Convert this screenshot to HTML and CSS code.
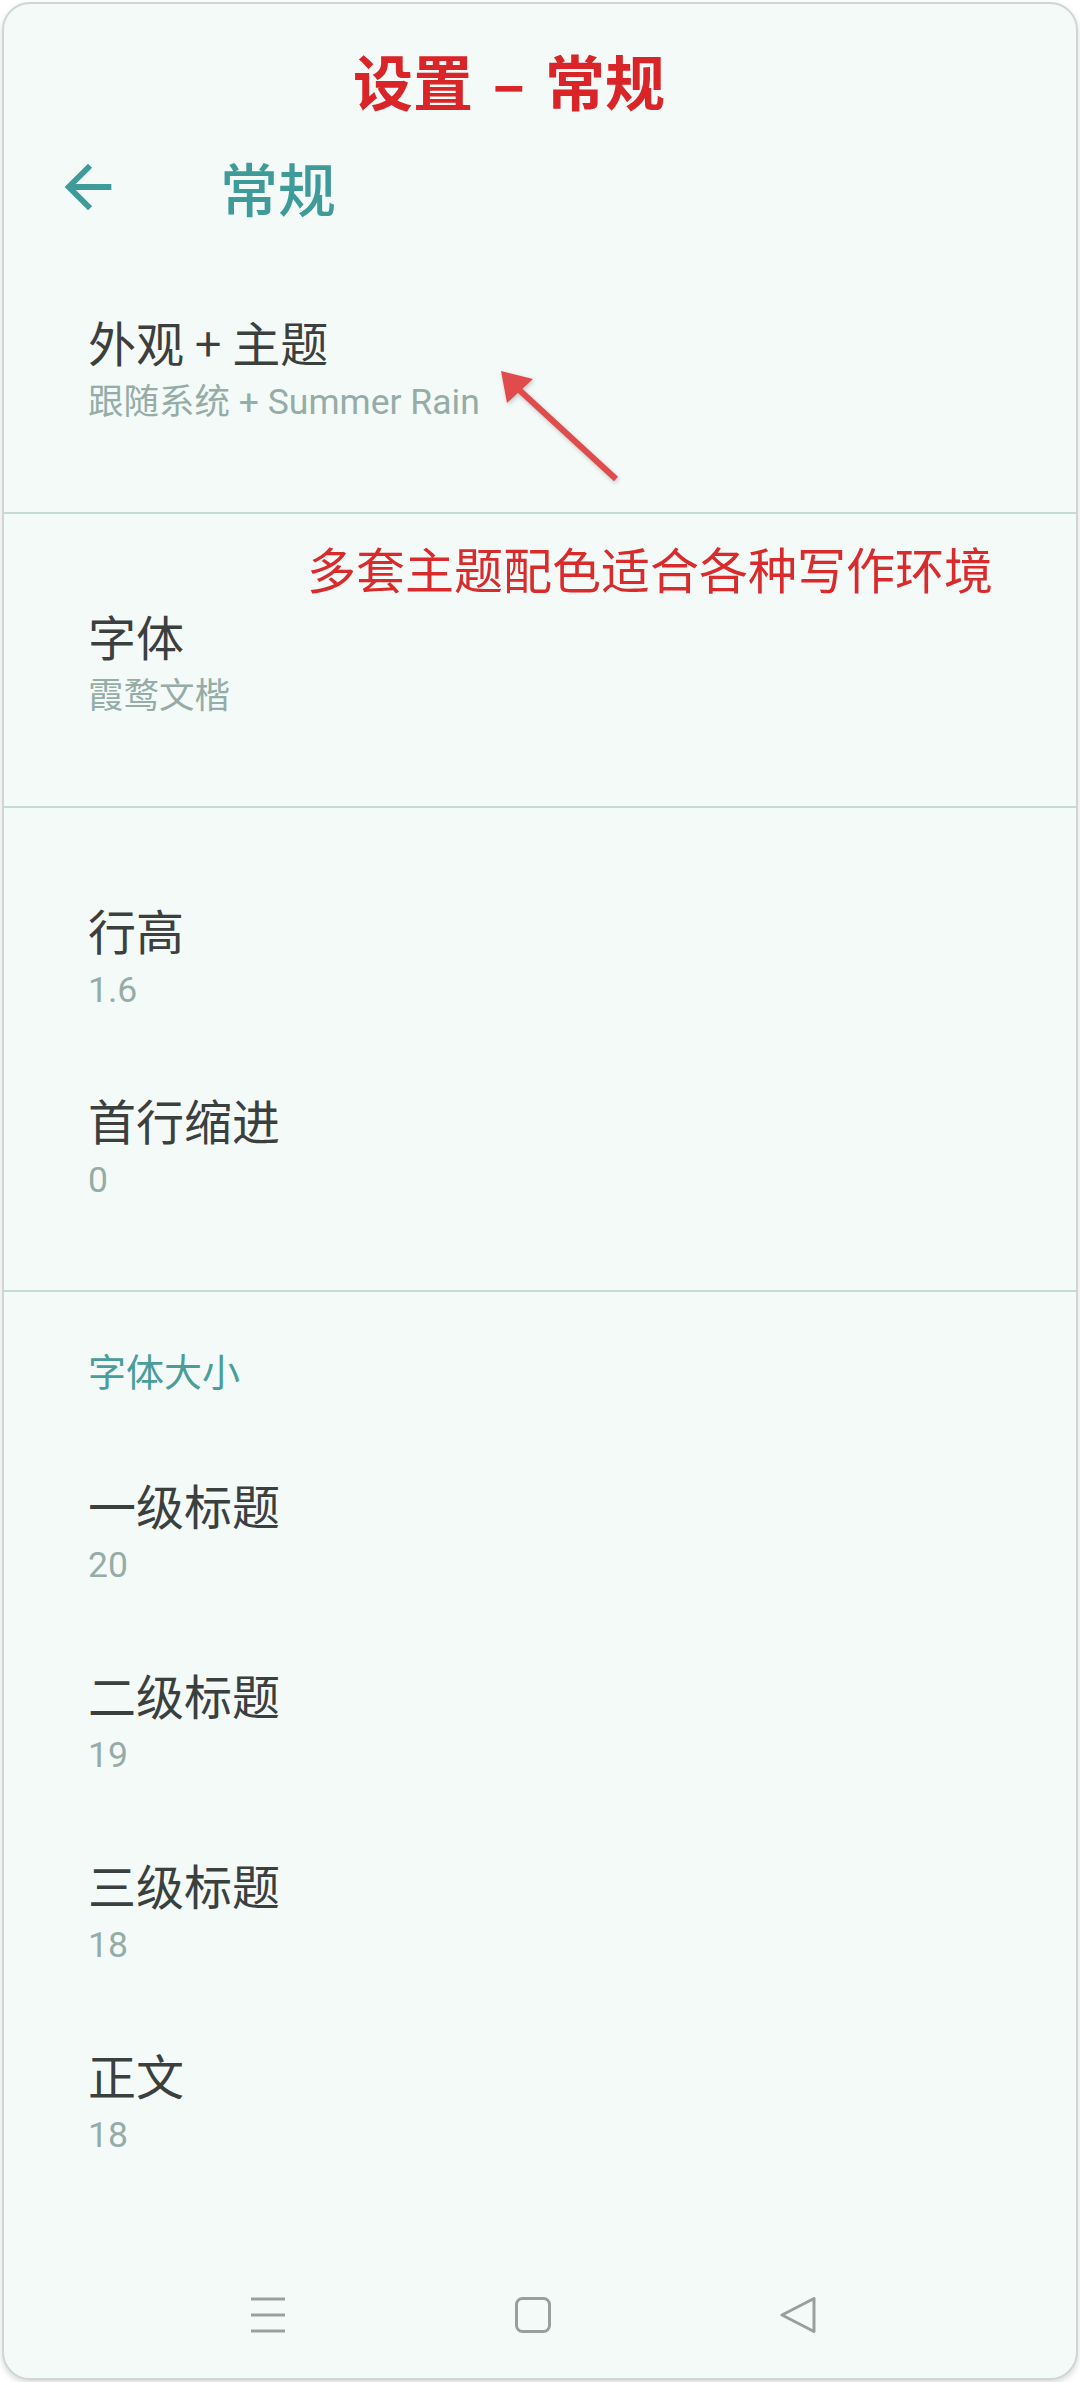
FILE: index.html
```html
<!DOCTYPE html>
<html lang="zh-CN">
<head>
    <meta charset="UTF-8" />
    <meta name="viewport" content="width=device-width, initial-scale=1.0"/>
    <title>设置 - 常规</title>
    <link rel="stylesheet" href="styles.css">
</head>
<body>
    <div class="screen">
        <div class="caption">设置 – 常规</div>

        <header class="appbar">
            <svg class="back" viewBox="0 0 24 24"><path d="M20 11H7.83l5.59-5.59L12 4l-8 8 8 8 1.41-1.41L7.83 13H20v-2z"/></svg>
            <h1 class="appbar-title">常规</h1>
        </header>

        <section class="group first">
            <div class="pref">
                <div class="pref-title">外观 + 主题</div>
                <div class="pref-summary">跟随系统 + Summer Rain</div>
            </div>
        </section>

        <section class="group">
            <div class="pref">
                <div class="pref-title">字体</div>
                <div class="pref-summary">霞鹜文楷</div>
            </div>
        </section>

        <section class="group">
            <div class="pref">
                <div class="pref-title">行高</div>
                <div class="pref-summary">1.6</div>
            </div>
            <div class="pref">
                <div class="pref-title">首行缩进</div>
                <div class="pref-summary">0</div>
            </div>
        </section>

        <section class="group">
            <div class="group-title">字体大小</div>
            <div class="pref">
                <div class="pref-title">一级标题</div>
                <div class="pref-summary">20</div>
            </div>
            <div class="pref">
                <div class="pref-title">二级标题</div>
                <div class="pref-summary">19</div>
            </div>
            <div class="pref">
                <div class="pref-title">三级标题</div>
                <div class="pref-summary">18</div>
            </div>
            <div class="pref">
                <div class="pref-title">正文</div>
                <div class="pref-summary">18</div>
            </div>
        </section>

        <nav class="navbar">
            <svg class="nav-icon" viewBox="0 0 36 36">
                <path d="M1 2h34M1 18h34M1 34h34"/>
            </svg>
            <svg class="nav-icon" viewBox="0 0 36 36">
                <rect x="1.5" y="1.5" width="33" height="33" rx="6"/>
            </svg>
            <svg class="nav-icon" viewBox="0 0 36 36">
                <path d="M2 18L34 1.5V34.5Z"/>
            </svg>
        </nav>

        <!-- annotations drawn over the screenshot -->
        <div class="note">多套主题配色适合各种写作环境</div>
        <svg class="pointer" viewBox="0 0 1072 600">
            <line x1="612" y1="475" x2="512" y2="383"/>
            <polygon points="497,367 529,375 503,399"/>
        </svg>
    </div>
</body>
</html>
```

FILE: styles.css
```css
body {
    margin: 0;
    background-color: #ffffff;
    font-family: "Noto Sans CJK SC", sans-serif;
}
.screen {
    position: relative;
    box-sizing: border-box;
    display: flex;
    flex-direction: column;
    height: 2378px;
    margin: 2px;
    background-color: #f3faf8;
    border: 2px solid #cfd6d3;
    border-radius: 28px;
    box-shadow: 0 3px 6px rgba(0,0,0,0.15);
}
.caption {
    height: 145px;
    box-sizing: border-box;
    padding: 41px 0 0 349px;
    font-size: 60px;
    line-height: 70px;
    font-weight: bold;
    word-spacing: 6px;
    color: #d92428;
}
.appbar {
    display: flex;
    align-items: center;
    height: 76px;
    padding-left: 49px;
}
.back {
    width: 70px;
    height: 70px;
    fill: #3f9a9a;
}
.appbar-title {
    margin: 0 0 0 97px;
    font-size: 58px;
    line-height: 70px;
    font-weight: 500;
    color: #3f9a9a;
}
.group {
    padding: 51px 0;
    border-top: 2px solid #c4dad4;
}
.group.first {
    padding-top: 46px;
    border-top: none;
}
.group-title {
    padding: 3px 0 40px 84px;
    font-size: 38px;
    line-height: 48px;
    color: #4a9d9a;
}
.pref {
    padding: 38px 0 36px 84px;
}
.pref-title {
    font-size: 48px;
    line-height: 64px;
    color: #3b403f;
}
.pref-summary {
    margin-top: 6px;
    font-family: Roboto, "Noto Sans CJK SC", sans-serif;
    font-size: 35.5px;
    line-height: 46px;
    color: #95aca7;
}
.navbar {
    margin-top: auto;
    height: 127px;
    display: flex;
    align-items: center;
    justify-content: center;
    gap: 229px;
    padding-right: 14px;
}
.nav-icon {
    width: 36px;
    height: 36px;
    fill: none;
    stroke: #9a9f9d;
    stroke-width: 3;
    stroke-linejoin: round;
}
.note {
    position: absolute;
    left: 303px;
    top: 534px;
    font-size: 49px;
    line-height: 59px;
    color: #d92b2b;
}
.pointer {
    position: absolute;
    left: 0;
    top: 0;
    width: 1072px;
    height: 600px;
    pointer-events: none;
    filter: drop-shadow(1px 2px 2px rgba(0,0,0,0.2));
}
.pointer line {
    stroke: #e04b4b;
    stroke-width: 6;
}
.pointer polygon {
    fill: #e04b4b;
}
```
